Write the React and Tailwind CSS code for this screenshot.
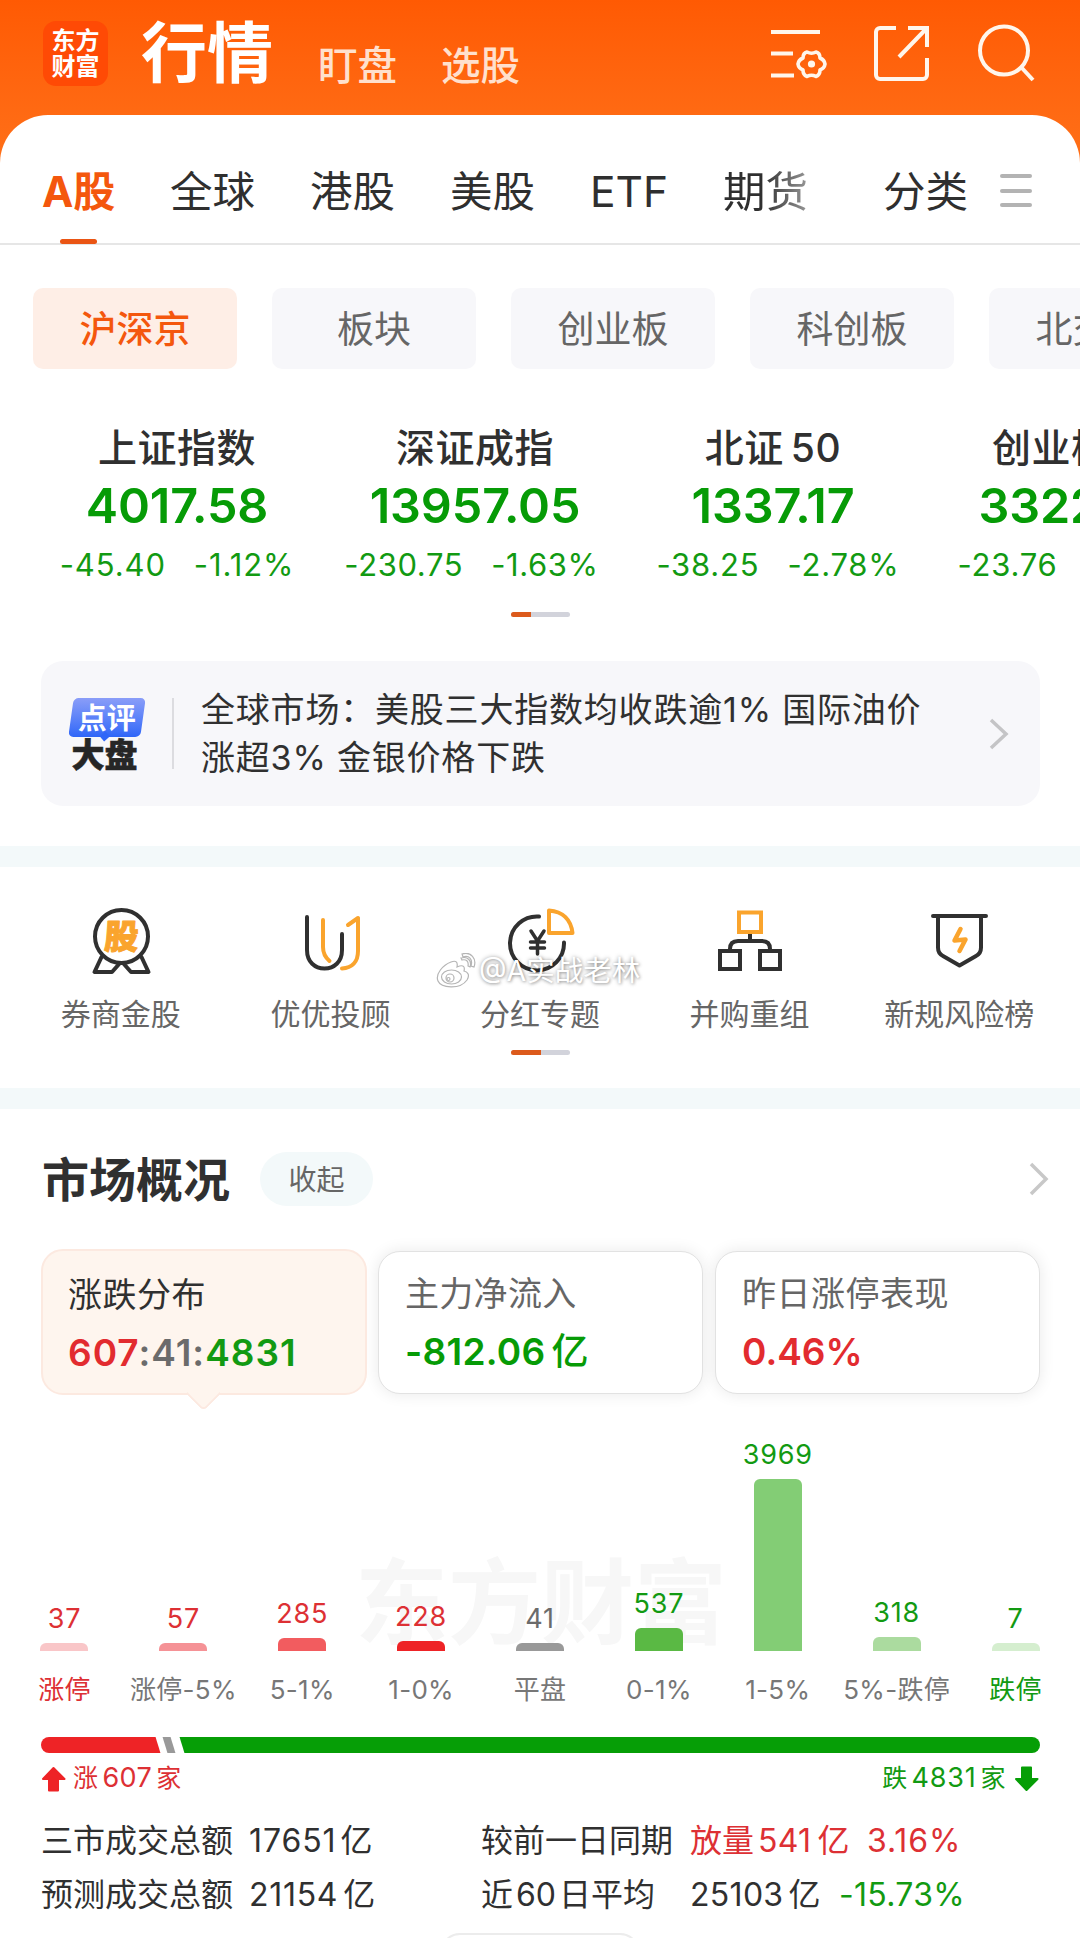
import React from 'react'
import clsx from 'clsx'

const tabs = ['全球', '港股', '美股', 'ETF']
const boards = ['沪深京', '板块', '创业板', '科创板', '北交所']

const indices = [
  { name: '上证指数', value: '4017.58', change: '-45.40', percent: '-1.12%', spacing: 'tracking-[0.9px]' },
  { name: '深证成指', value: '13957.05', change: '-230.75', percent: '-1.63%', spacing: '-ml-[7px] tracking-[0.6px]' },
  { name: '北证', suffix: '50', value: '1337.17', change: '-38.25', percent: '-2.78%', spacing: 'ml-[10px] tracking-[0.8px]' },
  { name: '创业板指', value: '3322.10', change: '-23.76', percent: '-0.71%', spacing: 'ml-[8px] tracking-[0.8px]' },
]

const distribution = [
  { label: '涨停', count: 37, height: 8, bar: 'bg-[#f9c6c8]', text: 'text-[#dd3034]', labelText: 'text-[#dd3034]' },
  { label: '涨停-5%', count: 57, height: 8, bar: 'bg-[#f59296]', text: 'text-[#dd3034]' },
  { label: '5-1%', count: 285, height: 13, bar: 'bg-[#f25c5f]', text: 'text-[#dd3034]' },
  { label: '1-0%', count: 228, height: 10, bar: 'bg-[#ee2326]', text: 'text-[#dd3034]' },
  { label: '平盘', count: 41, height: 8, bar: 'bg-[#999999]', text: 'text-[#6b6b6b]' },
  { label: '0-1%', count: 537, height: 23, bar: 'bg-[#5ab944]', text: 'text-[#129a12]' },
  { label: '1-5%', count: 3969, height: 172, bar: 'bg-[#83cd75]', text: 'text-[#129a12]' },
  { label: '5%-跌停', count: 318, height: 14, bar: 'bg-[#abdb9f]', text: 'text-[#129a12]' },
  { label: '跌停', count: 7, height: 8, bar: 'bg-[#d5eecf]', text: 'text-[#129a12]', labelText: 'text-[#129a12]' },
]

function Header() {
  return (
    <header className="flex h-[165px] items-start bg-linear-to-b from-[#ff5a03] to-[#ff7018] pl-[43px]">
      <div className="mt-[21px] flex h-[65px] w-[65px] flex-col items-center justify-center rounded-[13px] bg-[#ff4a05] text-[24px] leading-[26px] font-bold text-white">
        <span>东方</span>
        <span>财富</span>
      </div>
      <h1 className="mt-[13px] ml-[33px] w-[143px] text-[66px] leading-[80px] font-bold whitespace-nowrap text-white">行情</h1>
      <span className="mt-[41px] ml-[34px] w-[123px] text-[39.5px] leading-[50px] font-medium text-[#ffe0cd]">盯盘</span>
      <span className="mt-[41px] text-[39.5px] leading-[50px] font-medium text-[#ffe0cd]">选股</span>
      <div className="mt-[20px] ml-auto flex pr-[43px] text-[#fff6ec]">
        <svg width="64" height="64" viewBox="0 0 64 64" fill="none" stroke="currentColor" strokeWidth="4">
          <path d="M3 12h49M3 33.5h22M3 55.5h23" />
          {/* six lobed gear */}
          <path
            strokeWidth="3.6"
            strokeLinejoin="round"
            d="M39 32Q43.500 34.500 48 32Q52 33 52 38Q56.500 40 57 44Q56.500 48 52 50Q52 55 48 56.500Q43.500 54 39 56.500Q35 55 35 50Q30.500 48 30 44Q30.500 40 35 38Q35 33 39 32Z"
          />
          <circle cx="43.500" cy="44" r="3.6" fill="currentColor" stroke="none" />
        </svg>
        <svg className="ml-[39px]" width="64" height="64" viewBox="0 0 64 64" fill="none" stroke="currentColor" strokeWidth="4">
          <path d="M25 8H9a4 4 0 0 0-4 4v43a4 4 0 0 0 4 4h43a4 4 0 0 0 4-4V38" />
          <path d="M37 8h19v19M55 9 28 37" />
        </svg>
        <svg className="ml-[38px]" width="64" height="64" viewBox="0 0 64 64" fill="none" stroke="currentColor" strokeWidth="4">
          <circle cx="31" cy="30.500" r="24" />
          <path d="M48 47l12 13" />
        </svg>
      </div>
    </header>
  )
}

function MarketTabs() {
  return (
    <nav className="flex h-[130px] items-start border-b-2 border-[#e6e6e6] pt-[47px] pl-[42px] text-[42.5px] leading-[60px] text-[#2f2f2f]">
      <div className="flex w-[128px] flex-col">
        <span className="text-[42px] font-bold text-[#f4570d]">A股</span>
        <span className="mt-[17px] ml-[18px] h-[5px] w-[37px] rounded-full bg-[#ea5514]" />
      </div>
      {tabs.map((tab) => (
        <span key={tab} className="w-[140px]">{tab}</span>
      ))}
      <span className="-ml-[7px] bg-linear-to-r from-[#2f2f2f] from-45% to-[#999] bg-clip-text text-transparent">期货</span>
      <span className="ml-auto">分类</span>
      <span className="mt-[12px] mr-[48px] ml-[32px] flex h-[33px] w-[32px] flex-col justify-between">
        <i className="h-[4px] rounded-full bg-[#b3b3b3]" />
        <i className="h-[4px] rounded-full bg-[#b3b3b3]" />
        <i className="h-[4px] rounded-full bg-[#b3b3b3]" />
      </span>
    </nav>
  )
}

function Pager({ active }) {
  return (
    <div className="mx-auto h-[5px] w-[59px] overflow-hidden rounded-full bg-[#d2d3db]">
      <div className={clsx('h-full bg-[#dc5a1c]', active)} />
    </div>
  )
}

function Indices() {
  return (
    <section className="flex w-[1192px] pt-[51px] pl-[28px]">
      {indices.map((item) => (
        <div key={item.name} className="flex w-[298px] shrink-0 flex-col items-center whitespace-nowrap">
          <span className="h-[57px] text-[39px] leading-[56px] font-medium tracking-[0.5px] text-[#303030]">
            {item.name}
            {item.suffix && <span className="ml-[7px]">{item.suffix}</span>}
          </span>
          <span className="h-[58px] text-[48.5px] leading-[58px] font-semibold tracking-[-0.1px] text-[#069b06]">{item.value}</span>
          <span className={clsx('flex h-[60px] gap-[28px] text-[31px] leading-[60px] text-[#129a12]', item.spacing)}>
            <span>{item.change}</span>
            <span>{item.percent}</span>
          </span>
        </div>
      ))}
    </section>
  )
}

function Commentary() {
  return (
    <section className="mr-[40px] ml-[41px] mt-[44px] flex h-[145px] items-center rounded-[22px] bg-[#f7f7fa]">
      <div className="mt-[3px] ml-[27px] flex w-[78px] flex-col items-center">
        <div className="relative flex h-[39px] w-[72px] -skew-x-[8deg] items-center justify-center rounded-[5px] bg-linear-to-b from-[#8a9df8] to-[#2f66f8]">
          <span className="mt-[3px] skew-x-[8deg] text-[29px] leading-[38px] font-bold text-white">点评</span>
          <span className="absolute -bottom-[3px] left-[33px] h-[7px] w-[7px] rotate-45 bg-[#2f66f8]" />
        </div>
        <span className="mt-[2px] -ml-[5px] text-[33px] leading-[33px] font-black text-[#262626] [-webkit-text-stroke:0.6px_#262626]">大盘</span>
      </div>
      <div className="ml-[26px] h-[71px] w-[2px] bg-[#dcdce0]" />
      <p className="ml-[27px] flex-1 text-[34px] leading-[48px] tracking-[0.8px] text-[#303030]">
        全球市场：美股三大指数均收跌逾1% 国际油价
        <br />
        涨超3% 金银价格下跌
      </p>
      <svg className="mr-[29px]" width="24" height="36" viewBox="0 0 24 36" fill="none" stroke="#c4c4c6" strokeWidth="3.5">
        <path d="M4 4l15 14L4 32" />
      </svg>
    </section>
  )
}

function MedalIcon() {
  return (
    <svg width="72" height="72" viewBox="0 0 72 72" fill="none" stroke="#303030" strokeWidth="4" strokeLinejoin="round">
      <circle cx="36.500" cy="33.500" r="26.500" />
      <path d="M17 53L9.500 69H27L35 60M56 53l7.500 16H46L38 60" />
      <text
        x="39"
        y="46"
        textAnchor="middle"
        fontSize="34"
        fontWeight="900"
        fill="#faa42d"
        stroke="#faa42d"
        strokeWidth="1"
        transform="skewX(-4)"
      >
        股
      </text>
    </svg>
  )
}

function AdvisorIcon() {
  return (
    <svg width="72" height="72" viewBox="0 0 72 72" fill="none" strokeWidth="4" strokeLinecap="round">
      <path d="M13 14v33c0 12 8 18.500 17.500 18.500S48 59 48 47V31" stroke="#303030" />
      <path d="M29 17v27c0 7 3 11 6.500 14" stroke="#faa42d" />
      <path d="M54 22l10-7v33c0 11-6 17-16 17.500" stroke="#faa42d" strokeLinejoin="round" />
    </svg>
  )
}

function DividendIcon() {
  return (
    <svg width="72" height="72" viewBox="0 0 72 72" fill="none" stroke="#303030" strokeWidth="4" strokeLinecap="round" strokeLinejoin="round">
      <path d="M35 13.500A27 27 0 1 0 60 39.500" />
      <path d="M27 28l6.500 10 6.500-10M26.500 39h14M26.500 45h14M33.500 39v12" strokeWidth="3.500" />
      <path d="M45 7.500v22.500h23.500C67 17 59 8.500 45 7.500z" stroke="#faa42d" />
    </svg>
  )
}

function MergerIcon() {
  return (
    <svg width="72" height="72" viewBox="0 0 72 72" fill="none" stroke="#303030" strokeWidth="4">
      <path d="M36 29v10M16 48v-2q0-8 8-8h24q8 0 8 8v2" />
      <path d="M6 48h20v18H6zM46 48h20v18H46z" />
      <path d="M25 9.500h22V29H25z" stroke="#faa42d" />
    </svg>
  )
}

function RiskIcon() {
  return (
    <svg width="72" height="72" viewBox="0 0 72 72" fill="none" stroke="#303030" strokeWidth="4" strokeLinecap="round" strokeLinejoin="round">
      <path d="M10 13h53M15 13.500v31q0 6 5 8.500L36.500 62.500l16.500-9.500q5-2.500 5-8.500V13" />
      <path d="M37.500 26l-6 11.500 11-1-6 11.500" stroke="#faa42d" strokeWidth="4.500" />
    </svg>
  )
}

const shortcuts = [
  { label: '券商金股', icon: MedalIcon },
  { label: '优优投顾', icon: AdvisorIcon },
  { label: '分红专题', icon: DividendIcon },
  { label: '并购重组', icon: MergerIcon },
  { label: '新规风险榜', icon: RiskIcon },
]

function Shortcuts() {
  return (
    <section className="relative mt-[40px] h-[263px] border-t-[21px] border-b-[21px] border-[#f3f9fa] px-[16px] pt-[36px]">
      <div className="grid grid-cols-5">
        {shortcuts.map(({ label, icon: Icon }) => (
          <div key={label} className="flex flex-col items-center">
            <Icon />
            <span className="mt-[15px] text-[30px] leading-[48px] text-[#666]">{label}</span>
          </div>
        ))}
      </div>
      <div className="mt-[12px]">
        <Pager active="w-[30px]" />
      </div>
      <div className="absolute top-[83px] left-[436px] flex items-center gap-[3px] whitespace-nowrap text-white">
        <svg width="40" height="36" viewBox="0 0 40 36" fill="#fff" stroke="#b5b5b5" strokeWidth="1.200">
          <path d="M15 9C7 12-1 21 2 28s22 9 29-1c3-5 1-8-3-9 1-4 0-7-7-4 1-5-1-7-6-5z" />
          <ellipse cx="15.500" cy="24" rx="10" ry="7" />
          <circle cx="14" cy="25" r="4" />
          <circle cx="12.500" cy="26" r="1.500" />
          <path d="M25 5c7-2 11 3 9 9l-2-1c1-5-2-7-6-6zM26 1c9-3 15 5 12 13l-3-1c2-7-2-11-8-9z" />
        </svg>
        <span className="text-[28.5px] leading-[42px] [text-shadow:0_0_4px_rgba(0,0,0,0.35),1px_1px_3px_rgba(0,0,0,0.25)]">@A实战老林</span>
      </div>
    </section>
  )
}

function SummaryCards() {
  return (
    <div className="mr-[40px] ml-[41px] mt-[43px] flex h-[146px] items-center gap-[12px] text-[34px] leading-[50px]">
      <div className="relative h-[146px] w-[326px] rounded-[22px] border-2 border-[#fce9e0] bg-[#fef5ee] pt-[19px] pl-[25px]">
        <span className="absolute -bottom-[13px] left-[148px] h-[25px] w-[25px] rotate-45 rounded-br-[5px] border-r-2 border-b-2 border-[#fce9e0] bg-[#fef5ee]" />
        <div className="tracking-[0.5px] text-[#303030]">涨跌分布</div>
        <div className="mt-[8px] text-[37px] font-semibold tracking-[1px]">
          <span className="text-[#e22b2f]">607</span>
          <span className="text-[#6b6b6b]">:41:</span>
          <span className="text-[#129a12]">4831</span>
        </div>
      </div>
      <div className="-ml-px h-[143px] w-[325px] rounded-[22px] border border-[#e2e2e2] bg-white pt-[17px] pl-[26px] shadow-[0_0_16px_rgba(0,0,0,0.09)]">
        <div className="tracking-[0.3px] text-[#666]">主力净流入</div>
        <div className="mt-[8px] text-[37px] font-semibold tracking-[0.3px] text-[#069b06]">
          -812.06<span className="ml-[6px] text-[37px] font-medium">亿</span>
        </div>
      </div>
      <div className="h-[143px] w-[325px] rounded-[22px] border border-[#e2e2e2] bg-white pt-[17px] pl-[26px] shadow-[0_0_16px_rgba(0,0,0,0.09)]">
        <div className="tracking-[0.5px] text-[#666]">昨日涨停表现</div>
        <div className="mt-[8px] text-[37px] font-semibold text-[#e22b2f]">0.46%</div>
      </div>
    </div>
  )
}

function DistributionChart() {
  return (
    <div className="relative mx-[5px] mt-[40px] h-[282px]">
      <div className="absolute top-[108px] left-[350px] text-[93px] leading-[120px] font-bold whitespace-nowrap text-[#f7f7f7]">东方财富</div>
      <div className="relative grid h-full grid-cols-9">
        {distribution.map((item) => (
          <div key={item.label} className="flex flex-col items-center justify-end whitespace-nowrap">
            <span className={clsx('-mb-px text-[27px] leading-[30px] tracking-[0.8px]', item.text)}>{item.count}</span>
            <div className={clsx('mt-[10px] w-[48px] rounded-t-[6px]', item.bar)} style={{ height: item.height }} />
            <span className={clsx('mt-[20px] h-[46px] text-[26px] leading-[38px] tracking-[0.3px]', item.labelText || 'text-[#777]')}>
              {item.label}
            </span>
          </div>
        ))}
      </div>
    </div>
  )
}

function RatioBar() {
  return (
    <div className="mr-[40px] ml-[41px] mt-[20px]">
      <div className="flex h-[16px] overflow-hidden rounded-full">
        <div className="-ml-[10px] h-full w-[127px] shrink-0 skew-x-[17deg] bg-[#ee2326]" />
        <div className="ml-[7px] h-full w-[8px] shrink-0 skew-x-[17deg] bg-[#999]" />
        <div className="ml-[9px] h-full w-[900px] shrink-0 skew-x-[17deg] bg-[#069e06]" />
      </div>
      <div className="mt-[7px] flex h-[37px] items-center justify-between text-[25px] tracking-[0.4px]">
        <div className="flex items-center gap-[7px] text-[#dd3034]">
          <svg width="25" height="26" viewBox="0 0 25 26" fill="#ee2326" stroke="#ee2326" strokeWidth="2" strokeLinejoin="round">
            <path d="M12.500 2L23.500 13H17v11.500H8V13H2z" />
          </svg>
          <span>涨<span className="mx-[4px] text-[27px]">607</span>家</span>
        </div>
        <div className="mr-px flex items-center gap-[8px] text-[#129a12]">
          <span>跌<span className="mx-[4px] text-[27px] tracking-[0.8px]">4831</span>家</span>
          <svg width="25" height="26" viewBox="0 0 25 26" fill="#069e06" stroke="#069e06" strokeWidth="2" strokeLinejoin="round">
            <path d="M12.500 24L23.500 13H17V1.500H8V13H2z" />
          </svg>
        </div>
      </div>
    </div>
  )
}

function Turnover() {
  return (
    <div className="mx-[41px] mt-[17px] text-[32px] leading-[53px] whitespace-nowrap text-[#303030]">
      <div className="flex">
        <span className="w-[208px]">三市成交总额</span>
        <span className="w-[232px] tracking-[0.9px]">17651<span className="ml-[4px]">亿</span></span>
        <span className="w-[209px]">较前一日同期</span>
        <span className="w-[177px] text-[#dd3034]">放量<span className="mr-[6px] ml-[4px] tracking-[0.3px]">541</span>亿</span>
        <span className="tracking-[0.9px] text-[#dd3034]">3.16%</span>
      </div>
      <div className="flex pt-px">
        <span className="w-[208px]">预测成交总额</span>
        <span className="w-[232px] tracking-[0.7px]">21154<span className="ml-[5px]">亿</span></span>
        <span className="w-[209px]">近<span className="mx-[3px]">60</span>日平均</span>
        <span className="w-[149px] tracking-[0.3px]">25103<span className="ml-[5px]">亿</span></span>
        <span className="tracking-[0.3px] text-[#129a12]">-15.73%</span>
      </div>
    </div>
  )
}

export default function App() {
  return (
    <div className="h-[1938px] w-[1080px] overflow-hidden bg-white font-[Inter,'Noto_Sans_CJK_SC',sans-serif]">
      <Header />
      <main className="relative -mt-[50px] rounded-t-[48px] bg-white">
        <MarketTabs />
        <div className="mt-[43px] ml-[33px] flex h-[81px] gap-[35px]">
          {boards.map((board, i) => (
            <span
              key={board}
              className={clsx(
                'flex w-[204px] shrink-0 items-center justify-center rounded-[10px] pt-[3px] text-[37px]',
                i === 0 ? 'bg-[#feeee6] font-medium text-[#f4570d]' : 'bg-[#f7f7fa] text-[#666]',
              )}
            >
              {board}
            </span>
          ))}
        </div>
        <Indices />
        <div className="mt-[17px]">
          <Pager active="w-[20px]" />
        </div>
        <Commentary />
        <Shortcuts />
        <div className="mt-[43px] flex h-[54px] items-center pr-[29px] pl-[42px]">
          <h2 className="mt-[2px] w-[218px] text-[47px] font-bold whitespace-nowrap text-[#303030]">市场概况</h2>
          <span className="flex h-[54px] w-[113px] items-center justify-center rounded-full bg-[#f3f9fa] pt-px text-[28px] text-[#666]">收起</span>
          <svg className="ml-auto" width="24" height="38" viewBox="0 0 24 38" fill="none" stroke="#c8c8c8" strokeWidth="3.500">
            <path d="M4 4l15 15L4 34" />
          </svg>
        </div>
        <SummaryCards />
        <DistributionChart />
        <RatioBar />
        <Turnover />
        <div className="mx-auto mt-[12px] h-[40px] w-[200px] rounded-full border-2 border-[#ececec]" />
      </main>
    </div>
  )
}
